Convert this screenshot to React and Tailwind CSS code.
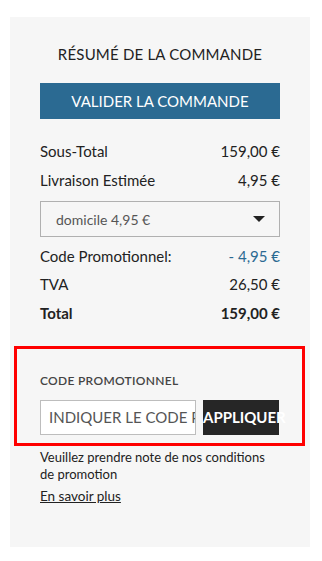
export default function App() {
  const font = { fontFamily: '"Lato", "Liberation Sans", sans-serif' };
  return (
    <div className="w-[322px] h-[561px] bg-white pt-[17px]" style={font}>
      <div className="mx-[10px] w-[300px] h-[530px] bg-[#f6f6f6] flex flex-col">
        <div className="mt-[27px] h-[20px] leading-[20px] text-center text-[15px] text-[#222] tracking-[0.2px]">
          RÉSUMÉ DE LA COMMANDE
        </div>
        <div className="mx-[30px] mt-[19px] h-[36px] bg-[#2b6a92] flex items-center justify-center text-white text-[15px]">
          VALIDER LA COMMANDE
        </div>

        <div className="mx-[30px] mt-[18px] flex flex-col text-[15px] text-[#222]">
          <div className="h-[29px] flex items-center justify-between">
            <span>Sous-Total</span>
            <span>159,00 €</span>
          </div>
          <div className="h-[29px] flex items-center justify-between">
            <span>Livraison Estimée</span>
            <span>4,95 €</span>
          </div>
          <div className="mt-[6px] h-[36px] border border-[#b0b0b0] flex items-center justify-between pl-[15px] pr-[14px] text-[14px] text-[#555]">
            <span>domicile 4,95 €</span>
            <svg width="12" height="7" viewBox="0 0 12 7">
              <path d="M0 0 L12 0 L6 6 Z" fill="#222" />
            </svg>
          </div>
          <div className="mt-[5px] h-[28px] flex items-center justify-between">
            <span>Code Promotionnel:</span>
            <span className="text-[#2b6a92]">- 4,95 €</span>
          </div>
          <div className="h-[29px] flex items-center justify-between">
            <span>TVA</span>
            <span>26,50 €</span>
          </div>
          <div className="h-[29px] flex items-center justify-between font-bold">
            <span>Total</span>
            <span>159,00 €</span>
          </div>
        </div>

        <div className="ml-[4px] mr-[5px] mt-[18px] border-[3px] border-[#ff0000] pl-[23px] pr-[23px] pt-[24px] pb-[8px]">
          <div className="h-[16px] leading-[16px] text-[12px] font-semibold text-[#444] tracking-[0.3px]">
            CODE PROMOTIONNEL
          </div>
          <div className="mt-[11px] flex gap-[7px]">
            <div className="w-[156px] h-[35px] bg-white border border-[#bdbdbd] flex items-center pl-[8px] overflow-hidden whitespace-nowrap text-[15px] text-[#555]">
              INDIQUER LE CODE PROMO
            </div>
            <div className="w-[76px] h-[35px] bg-[#262626] flex items-center whitespace-nowrap text-white text-[15px] font-bold">
              APPLIQUER
            </div>
          </div>
        </div>

        <div className="mx-[30px] mt-[3px] text-[13px] leading-[17px] text-[#222]">
          Veuillez prendre note de nos conditions de promotion
        </div>
        <div className="mx-[30px] mt-[5px] text-[13.5px] leading-[17px] text-[#222] underline">
          En savoir plus
        </div>
      </div>
    </div>
  );
}
